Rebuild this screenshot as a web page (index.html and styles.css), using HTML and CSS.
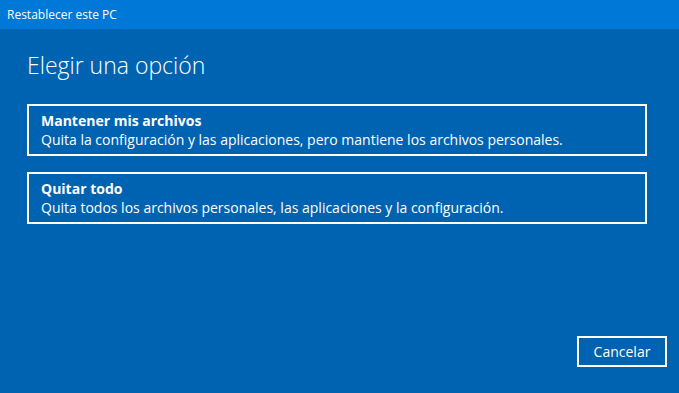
FILE: index.html
```html
<!DOCTYPE html>
<html lang="es">
<head>
    <meta charset="UTF-8">
    <meta name="viewport" content="width=device-width, initial-scale=1.0">
    <title>Restablecer este PC</title>
    <link rel="stylesheet" href="styles.css">
</head>
<body>
    <div class="window">
        <div class="title-bar">Restablecer este PC</div>
        <div class="content">
            <h1>Elegir una opción</h1>
            <div class="options">
                <button class="option">
                    <span class="option-title">Mantener mis archivos</span>
                    <span class="option-desc">Quita la configuración y las aplicaciones, pero mantiene los archivos personales.</span>
                </button>
                <button class="option">
                    <span class="option-title">Quitar todo</span>
                    <span class="option-desc">Quita todos los archivos personales, las aplicaciones y la configuración.</span>
                </button>
            </div>
            <div class="footer">
                <button class="cancel-button">Cancelar</button>
            </div>
        </div>
    </div>
</body>
</html>
```

FILE: styles.css
```css
* {
    box-sizing: border-box;
}
body {
    margin: 0;
    font-family: 'Segoe UI', 'Open Sans', 'Noto Sans', sans-serif;
    background-color: #0063B1;
    color: #FFFFFF;
}
.window {
    width: 679px;
    height: 393px;
    display: flex;
    flex-direction: column;
}
.title-bar {
    height: 29px;
    background-color: #0078D7;
    font-size: 12px;
    padding: 6px 0 0 7px;
}
.content {
    flex: 1;
    display: flex;
    flex-direction: column;
    padding: 0 12px 26px 27px;
}
h1 {
    font-size: 23px;
    font-weight: 300;
    margin: 21px 0 0 0;
    line-height: 31px;
}
.options {
    display: flex;
    flex-direction: column;
    gap: 16px;
    margin-top: 23px;
}
.option {
    width: 620px;
    height: 52px;
    border: 2px solid #FFFFFF;
    background: none;
    color: #FFFFFF;
    font-family: inherit;
    text-align: left;
    padding: 5px 12px 0;
    display: flex;
    flex-direction: column;
    cursor: pointer;
}
.option-title {
    font-size: 14px;
    font-weight: 700;
    line-height: 19px;
}
.option-desc {
    font-size: 14px;
    line-height: 19px;
}
.footer {
    margin-top: auto;
    display: flex;
    justify-content: flex-end;
}
.cancel-button {
    width: 90px;
    height: 31px;
    border: 2px solid #FFFFFF;
    background: none;
    color: #FFFFFF;
    font-family: inherit;
    font-size: 14px;
    padding: 0;
    cursor: pointer;
}
```
